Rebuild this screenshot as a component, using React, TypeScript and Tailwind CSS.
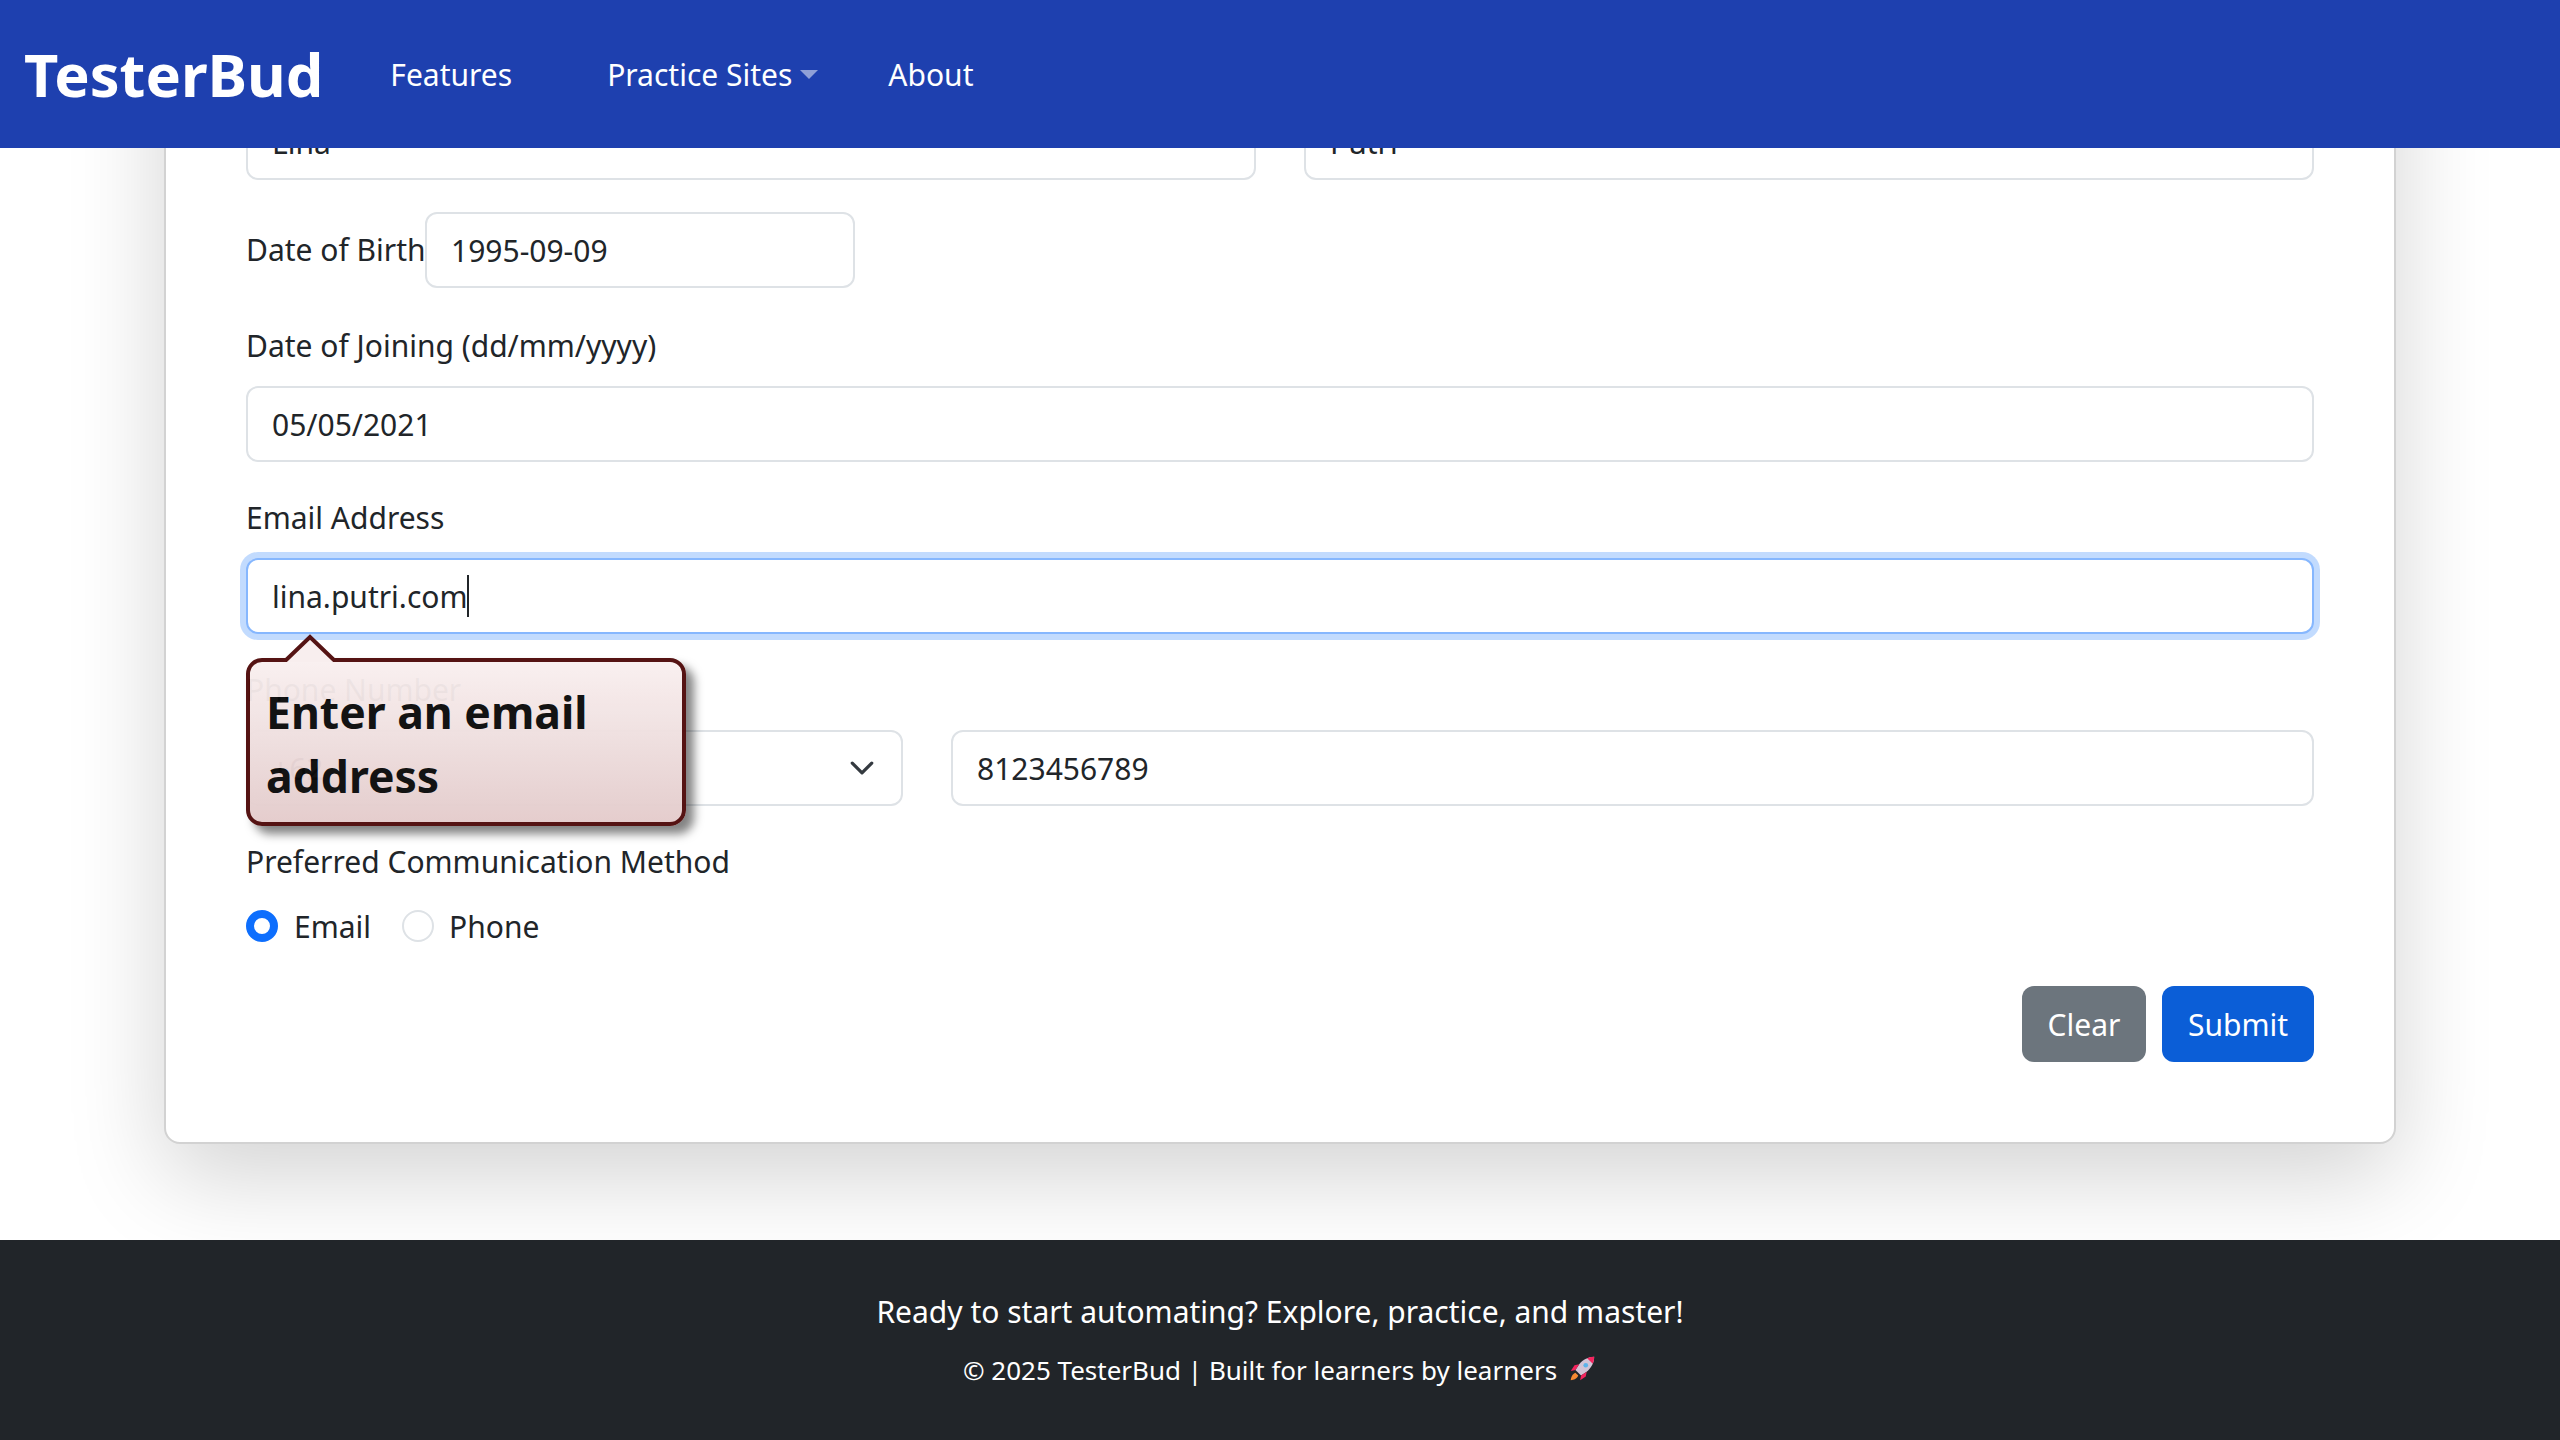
const inputClass = 'h-[76px] w-full rounded-xl border-2 border-[#dee2e6] bg-white px-6 text-[30px] text-[#212529] outline-none'
const labelClass = 'mb-4 block text-[30px] leading-[48px] text-[#212529]'

function Rocket() {
  return (
    <svg viewBox="0 0 32 32" className="ml-[10px] inline-block h-[30px] w-[30px] align-[-4px]">
      <path d="M29 3c-6 0-12 3-16 8l-4 6 6 6 6-4c5-4 8-10 8-16z" fill="#d3c4d6" />
      <path d="M29 3c-2.500 0-5 .5-7.500 1.500l6 6C28.500 8 29 5.500 29 3z" fill="#f4245e" />
      <circle cx="20" cy="12" r="2.500" fill="#5eb3ea" />
      <path d="M9 17l-5 1 4-6 5-1zM15 23l-1 5 6-4 1-5z" fill="#f4245e" />
      <path d="M9 20l3 3c-1 3-5 5-8 5 0-3 2-7 5-8z" fill="#f58a32" />
    </svg>
  )
}

export default function App() {
  return (
    <div className="flex h-[1440px] flex-col overflow-hidden bg-white font-['Noto_Sans',sans-serif] text-[30px] text-[#212529]">
      <header className="relative z-10 flex h-[148px] shrink-0 items-center bg-[#1e40af] pl-6 text-white">
        <span className="text-[59.500px] font-bold leading-none">TesterBud</span>
        <nav className="flex items-center">
          <a className="ml-[67px]">Features</a>
          <a className="ml-[95px]">Practice Sites</a>
          <span className="ml-2 h-0 w-0 border-x-[9px] border-t-[9px] border-x-transparent border-t-white/50" />
          <a className="ml-[70px]">About</a>
        </nav>
      </header>

      <main className="flex-1 px-[164px]">
        <form className="-mt-[188px] rounded-2xl border-2 border-[#d2d2d2] bg-white px-[80px] pt-[78px] pb-[80px] shadow-[0_32px_96px_rgba(0,0,0,0.175)]">
          <div className="mb-8 flex gap-12">
            <div className="flex-1">
              <label className={labelClass}>First Name</label>
              <input className={inputClass} defaultValue="Lina" />
            </div>
            <div className="flex-1">
              <label className={labelClass}>Last Name</label>
              <input className={inputClass} defaultValue="Putri" />
            </div>
          </div>

          <div className="mb-[34px] flex items-center">
            <label className="w-[179px] shrink-0 whitespace-nowrap text-[30px] leading-[48px]">Date of Birth</label>
            <input className={`${inputClass} !w-[430px]`} defaultValue="1995-09-09" />
          </div>

          <div className="mb-8">
            <label className={labelClass}>Date of Joining (dd/mm/yyyy)</label>
            <input className={inputClass} defaultValue="05/05/2021" />
          </div>

          <div className="relative mb-8">
            <label className={labelClass}>Email Address</label>
            <div className="flex h-[76px] items-center rounded-xl border-2 border-[#86b7fe] bg-white px-6 shadow-[0_0_0_6px_rgba(13,110,253,0.25)]">
              <span>lina.putri.com</span>
              <span className="h-[42px] w-[2px] bg-[#212529]" />
            </div>
          </div>

          <div className="relative mb-8">
            <label className={labelClass}>Phone Number</label>
            <div className="flex gap-12">
              <div className="flex h-[76px] w-[657px] items-center justify-between rounded-xl border-2 border-[#dee2e6] bg-white px-6">
                <span>+62</span>
                <svg viewBox="0 0 16 16" className="mr-0.5 h-[26px] w-[26px]" fill="none" stroke="#343a40" strokeWidth="2" strokeLinecap="round" strokeLinejoin="round">
                  <path d="m2 5 6 6 6-6" />
                </svg>
              </div>
              <input className={`${inputClass} flex-1`} defaultValue="8123456789" />
            </div>

            {/* validation bubble */}
            <div className="absolute -top-[8px] left-0 z-20 w-[440px] opacity-[0.96]">
              <svg viewBox="0 0 64 28" className="absolute -top-[24px] left-[32px] z-10 h-7 w-16">
                <path d="M6 28 32 3l26 25" fill="#f8eeee" stroke="#4f0a0a" strokeWidth="4" />
              </svg>
              <div className="rounded-2xl border-4 border-[#4f0a0a] bg-gradient-to-b from-[#f9f0f0] to-[#e4cccc] px-4 pt-[18px] pb-[14px] text-[44.500px] font-bold leading-[64px] text-[#0a0a0a] shadow-[8px_8px_10px_rgba(0,0,0,0.5)]">
                Enter an email address
              </div>
            </div>
          </div>

          <label className={labelClass}>Preferred Communication Method</label>
          <div className="flex h-12 items-center">
            <span className="h-8 w-8 rounded-full border-[8px] border-[#0d6efd] bg-white" />
            <span className="ml-4">Email</span>
            <span className="ml-[31px] h-8 w-8 rounded-full border-2 border-[#dee2e6] bg-white" />
            <span className="ml-[15px]">Phone</span>
          </div>

          <div className="mt-9 flex justify-end gap-4">
            <button type="button" className="h-[76px] w-[124px] rounded-xl bg-[#6c757d] text-white">Clear</button>
            <button type="button" className="h-[76px] w-[152px] rounded-xl bg-[#0b5ed7] text-white">Submit</button>
          </div>
        </form>
      </main>

      <footer className="flex h-[200px] shrink-0 flex-col items-center bg-[#212529] pt-[48px] text-white">
        <p className="leading-[48px]">Ready to start automating? Explore, practice, and master!</p>
        <p className="mt-[13px] text-[26px] leading-[42px]">© 2025 TesterBud | Built for learners by learners<Rocket /></p>
      </footer>
    </div>
  )
}
